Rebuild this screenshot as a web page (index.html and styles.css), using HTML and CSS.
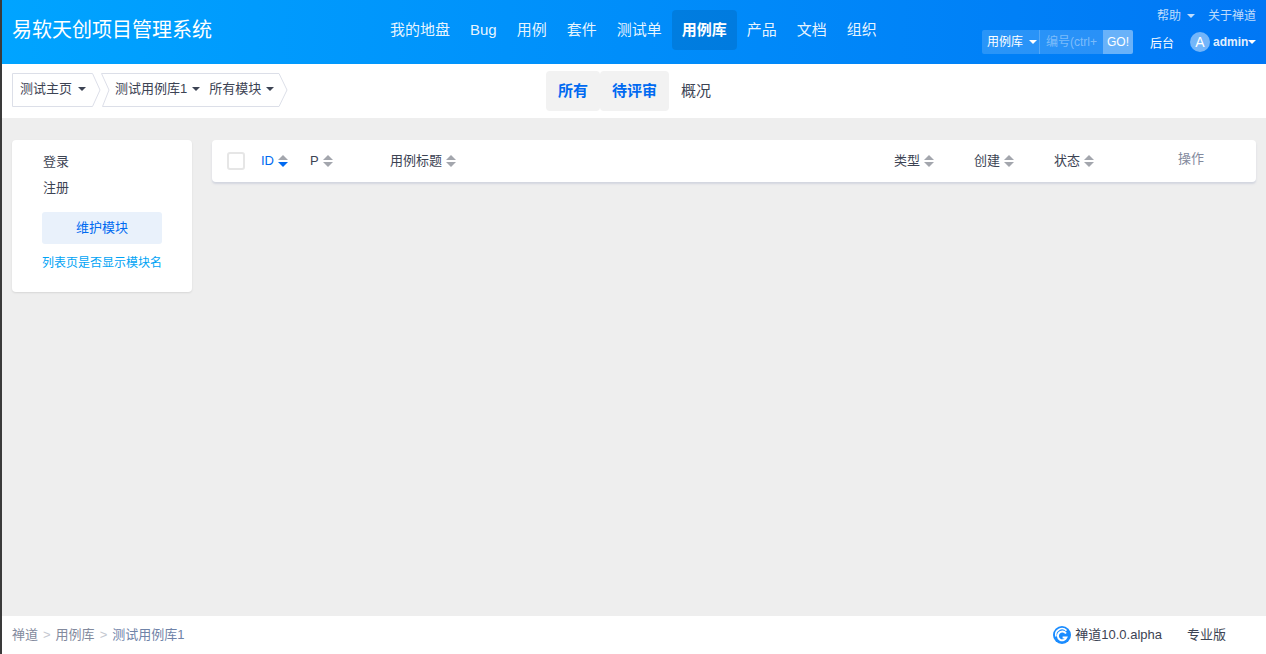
FILE: index.html
```html
<!DOCTYPE html>
<html lang="zh-CN">
<head>
<meta charset="utf-8">
<title>用例库</title>
<link rel="stylesheet" href="styles.css">
</head>
<body>
<div class="page">
  <header class="header">
    <div class="brand">易软天创项目管理系统</div>
    <nav class="nav">
      <a class="nav-item">我的地盘</a>
      <a class="nav-item">Bug</a>
      <a class="nav-item">用例</a>
      <a class="nav-item">套件</a>
      <a class="nav-item">测试单</a>
      <a class="nav-item active">用例库</a>
      <a class="nav-item">产品</a>
      <a class="nav-item">文档</a>
      <a class="nav-item">组织</a>
    </nav>
    <div class="tools">
      <div class="tools-top">
        <span class="tool-link">帮助<i class="caret"></i></span>
        <span class="tool-link">关于禅道</span>
      </div>
      <div class="tools-bottom">
        <div class="search">
          <span class="search-type">用例库<i class="caret white"></i></span>
          <span class="search-input">编号(ctrl+</span>
          <span class="search-go">GO!</span>
        </div>
        <span class="admin-link">后台</span>
        <span class="user"><span class="avatar">A</span><b class="user-name">admin</b><i class="caret white tight"></i></span>
      </div>
    </div>
  </header>

  <div class="subbar">
    <div class="crumbs">
      <div class="crumb first">
        <svg class="crumb-bg" viewBox="0 0 89 34"><path d="M.5.5H80.5L88 17 80.5 33.5H.5z"/></svg>
        <span class="crumb-part">测试主页<i class="caret dark"></i></span>
      </div>
      <div class="crumb second">
        <svg class="crumb-bg" viewBox="0 0 187 34"><path d="M.5.5H178L186 17 178 33.5H1.5L8 17z"/></svg>
        <span class="crumb-part">测试用例库1<i class="caret dark small"></i></span>
        <span class="crumb-part">所有模块<i class="caret dark small"></i></span>
      </div>
    </div>
    <div class="tabs">
      <a class="tab on">所有</a>
      <a class="tab on">待评审</a>
      <a class="tab">概况</a>
    </div>
  </div>

  <main class="main">
    <aside class="side">
      <div class="tree-item">登录</div>
      <div class="tree-item">注册</div>
      <a class="side-btn">维护模块</a>
      <a class="side-link">列表页是否显示模块名</a>
    </aside>
    <section class="table-card">
      <span class="check"></span>
      <span class="col col-id sorted">ID<svg class="sort" viewBox="0 0 10 12"><path class="up" d="M5 0 10 5H0z"/><path class="down" d="M0 7H10L5 12z"/></svg></span>
      <span class="col col-p">P<svg class="sort" viewBox="0 0 10 12"><path class="up" d="M5 0 10 5H0z"/><path class="up" d="M0 7H10L5 12z"/></svg></span>
      <span class="col col-title">用例标题<svg class="sort" viewBox="0 0 10 12"><path class="up" d="M5 0 10 5H0z"/><path class="up" d="M0 7H10L5 12z"/></svg></span>
      <span class="col col-type">类型<svg class="sort" viewBox="0 0 10 12"><path class="up" d="M5 0 10 5H0z"/><path class="up" d="M0 7H10L5 12z"/></svg></span>
      <span class="col col-made">创建<svg class="sort" viewBox="0 0 10 12"><path class="up" d="M5 0 10 5H0z"/><path class="up" d="M0 7H10L5 12z"/></svg></span>
      <span class="col col-state">状态<svg class="sort" viewBox="0 0 10 12"><path class="up" d="M5 0 10 5H0z"/><path class="up" d="M0 7H10L5 12z"/></svg></span>
      <span class="col col-act">操作</span>
    </section>
  </main>

  <footer class="footer">
    <div class="path">
      <a>禅道</a><i class="sep">&gt;</i><a>用例库</a><i class="sep">&gt;</i><a>测试用例库1</a>
    </div>
    <div class="powered">
      <svg class="logo" viewBox="0 0 18 18">
        <circle cx="9" cy="9" r="9" fill="#1a8cff"/>
        <path d="M3 10.5A6.2 6.2 0 0 1 13.5 4.6" fill="none" stroke="#fff" stroke-width="1.6"/>
        <path d="M13 7.5A4.4 4.4 0 1 0 13.4 11.5H9.6" fill="none" stroke="#fff" stroke-width="2"/>
      </svg>
      <span class="version">禅道10.0.alpha</span>
      <span class="edition">专业版</span>
    </div>
  </footer>
</div>
</body>
</html>
```

FILE: styles.css
```css
* { box-sizing: border-box; }
html, body { margin: 0; height: 100%; }
body {
  font-family: "Liberation Sans", "Noto Sans CJK SC", sans-serif;
  font-size: 13px;
  color: #3c4353;
  background: #eee;
}
.page {
  height: 654px;
  width: 1266px;
  display: flex;
  flex-direction: column;
  border-left: 2px solid #3a3a3a;
  overflow: hidden;
}
.header {
  height: 64px;
  flex: none;
  display: flex;
  background: linear-gradient(92deg, #00a4ff 0%, #0077f5 100%);
  color: #fff;
  position: relative;
}
.brand {
  font-size: 20px;
  line-height: 60px;
  margin-left: 10px;
  width: 200px;
  white-space: nowrap;
}
.nav {
  display: flex;
  margin-left: 168px;
  margin-top: 10px;
  height: 40px;
}
.nav-item {
  font-size: 15px;
  line-height: 40px;
  padding: 0 10px;
  border-radius: 4px;
  color: rgba(255, 255, 255, .92);
  white-space: nowrap;
}
.nav-item.active {
  background: rgba(0, 0, 0, .1);
  font-weight: 700;
  color: #fff;
}
.tools {
  position: absolute;
  right: 10px;
  top: 0;
  display: flex;
  flex-direction: column;
  align-items: flex-end;
}
.tools-top {
  display: flex;
  gap: 13px;
  height: 30px;
  line-height: 32px;
  font-size: 12px;
  color: rgba(255, 255, 255, .75);
}
.tools-bottom {
  display: flex;
  align-items: center;
  height: 24px;
}
.caret {
  display: inline-block;
  width: 0;
  height: 0;
  border-left: 4px solid transparent;
  border-right: 4px solid transparent;
  border-top: 4px solid rgba(255, 255, 255, .75);
  margin-left: 6px;
  vertical-align: 2px;
}
.caret.white { border-top-color: #fff; }
.caret.tight { margin-left: 2px; }
.caret.dark { border-top-color: #3c4353; }
.caret.small { margin-left: 5px; }
.search {
  display: flex;
  width: 151px;
  height: 24px;
  line-height: 24px;
  font-size: 12px;
  background: rgba(255, 255, 255, .16);
  border-radius: 2px;
  overflow: hidden;
}
.search-type {
  width: 57px;
  padding-left: 5px;
  white-space: nowrap;
}
.search-input {
  width: 64px;
  padding-left: 6px;
  color: rgba(255, 255, 255, .4);
  white-space: nowrap;
  border-left: 1px solid rgba(255, 255, 255, .2);
  overflow: hidden;
}
.search-go {
  width: 30px;
  text-align: center;
  background: rgba(255, 255, 255, .3);
}
.admin-link {
  font-size: 12px;
  margin-left: 17px;
  width: 40px;
}
.user {
  display: flex;
  align-items: center;
  font-size: 12px;
}
.avatar {
  width: 20px;
  height: 20px;
  border-radius: 50%;
  background: rgba(255, 255, 255, .45);
  text-align: center;
  font-size: 14px;
  line-height: 20px;
  margin-right: 3px;
}
.user-name { font-weight: 700; color: rgba(255, 255, 255, .9); width: 33px; white-space: nowrap; }
.subbar {
  height: 54px;
  flex: none;
  background: #fff;
  display: flex;
  position: relative;
}
.crumbs {
  display: flex;
  margin-left: 10px;
  margin-top: 9px;
  height: 34px;
}
.crumb {
  position: relative;
  height: 34px;
  line-height: 32px;
  white-space: nowrap;
  color: #3c4353;
  display: flex;
}
.crumb.first {
  width: 89px;
  padding-left: 8px;
}
.crumb.second {
  margin-left: 0;
  width: 187px;
  padding-left: 14px;
  gap: 9px;
}
.crumb-bg {
  position: absolute;
  left: 0;
  top: 0;
  width: 100%;
  height: 100%;
}
.crumb-bg path {
  fill: #fff;
  stroke: #dcdfe8;
  stroke-width: 1;
}
.crumb-part { position: relative; }
.tabs {
  position: absolute;
  left: 544px;
  top: 7px;
  display: flex;
  height: 40px;
}
.tab {
  font-size: 15px;
  line-height: 40px;
  padding: 0 12px;
  border-radius: 4px;
  color: #3c4353;
}
.tab.on {
  background: #f2f2f2;
  color: #006af1;
  font-weight: 700;
}
.main {
  flex: 1;
  display: flex;
  align-items: flex-start;
  padding: 22px 10px 0 10px;
  gap: 20px;
}
.side {
  width: 180px;
  height: 152px;
  background: #fff;
  border-radius: 4px;
  box-shadow: 0 1px 2px rgba(0, 0, 0, .1);
  padding: 9px 30px 0;
  display: flex;
  flex-direction: column;
}
.tree-item {
  height: 26px;
  line-height: 26px;
  padding-left: 1px;
}
.side-btn {
  display: block;
  margin-top: 11px;
  height: 32px;
  line-height: 31px;
  background: #e9f1fb;
  color: #006af1;
  border-radius: 3px;
  text-align: center;
}
.side-link {
  display: block;
  margin-top: 11px;
  font-size: 12px;
  line-height: 16px;
  color: #00a3f5;
  white-space: nowrap;
}
.table-card {
  position: relative;
  flex: 1;
  height: 42px;
  background: #fff;
  border-radius: 4px;
  box-shadow: 0 2px 2px rgba(200, 204, 216, .7);
}
.check {
  position: absolute;
  left: 15px;
  top: 12px;
  width: 18px;
  height: 18px;
  border: 2px solid #e6e6e6;
  border-radius: 3px;
}
.col {
  position: absolute;
  top: 0;
  line-height: 41px;
  white-space: nowrap;
}
.sort {
  width: 10px;
  height: 12px;
  margin-left: 4px;
  vertical-align: -2px;
}
.up { fill: #a3a6ad; }
.down { fill: #006af1; }
.sorted { color: #006af1; }
.col-id { left: 49px; }
.col-p { left: 98px; }
.col-title { left: 178px; }
.col-type { left: 682px; }
.col-made { left: 762px; }
.col-state { left: 842px; }
.col-act { left: 966px; color: #838a9d; line-height: 38px; }
.footer {
  height: 38px;
  flex: none;
  background: #fff;
  display: flex;
  justify-content: space-between;
  align-items: center;
  padding: 0 40px 3px 10px;
}
.path { color: #838a9d; }
.path a:last-child { color: #6f83a8; }
.sep {
  font-style: normal;
  color: #c4c7cf;
  margin: 0 5px;
}
.powered {
  display: flex;
  align-items: center;
}
.logo { width: 18px; height: 18px; margin-right: 4px; margin-top: 2px; }
.edition { margin-left: 25px; }
```
